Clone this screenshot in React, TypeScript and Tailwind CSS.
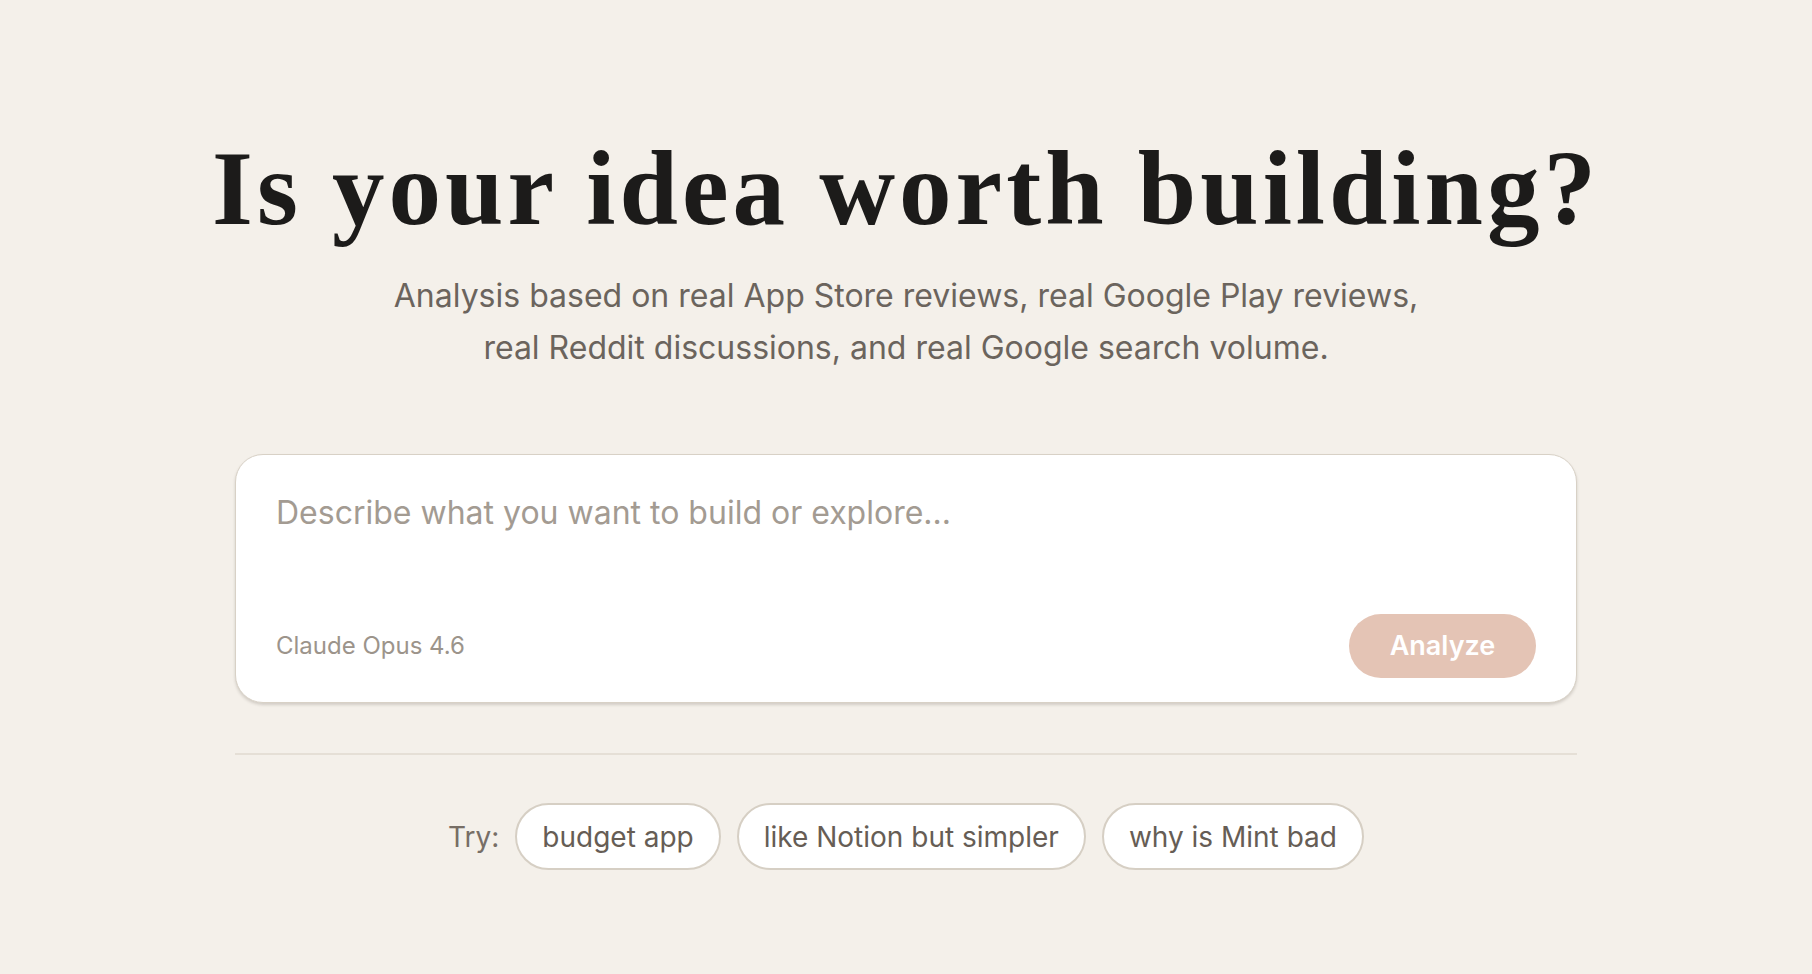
import React, { useState } from 'react';

const suggestions = ['budget app', 'like Notion but simpler', 'why is Mint bad'];

export default function App() {
  const [idea, setIdea] = useState('');

  return (
    <div className="min-h-screen bg-[#f4f0ea] font-['Inter','Noto_Sans',sans-serif] text-[#1c1c1c]">
      <main className="flex flex-col items-center pt-[136px] pb-24">
        {/* Hero */}
        <h1 className="font-['Liberation_Serif','Times_New_Roman',serif] text-[105px] font-bold leading-none tracking-[4px] text-[#1c1b1a]">
          Is your idea worth building?
        </h1>
        <p className="mt-[29px] text-center text-[32px] leading-[52px] text-[#6b645d]">
          Analysis based on real App Store reviews, real Google Play reviews,
          <br />
          real Reddit discussions, and real Google search volume.
        </p>

        {/* Prompt box */}
        <div className="mt-[80px] w-[1342px] rounded-[28px] border border-[#d8d1c6] bg-white shadow-[0_2px_3px_rgba(60,50,40,0.18)]">
          <div className="px-10 pt-[38px] pb-[24px]">
            <textarea
              value={idea}
              onChange={(e) => setIdea(e.target.value)}
              placeholder="Describe what you want to build or explore..."
              className="block h-[121px] w-full resize-none bg-transparent font-['Inter',sans-serif] text-[32px] leading-[40px] text-[#3a3632] outline-none placeholder:text-[#a39b92]"
            />
            <div className="flex items-center justify-between">
              <span className="text-[24px] text-[#9c948b]">Claude Opus 4.6</span>
              <button
                type="button"
                className="flex h-[64px] w-[187px] items-center justify-center rounded-full bg-[#e4c4b5] text-[27px] font-semibold text-white"
              >
                Analyze
              </button>
            </div>
          </div>
        </div>

        <div className="mt-[50px] h-[2px] w-[1342px] bg-[#e5dfd6]" />

        {/* Example prompts */}
        <div className="mt-[48px] flex items-center gap-[16px]">
          <span className="text-[28px] text-[#776e66]">Try:</span>
          {suggestions.map((s) => (
            <button
              key={s}
              type="button"
              onClick={() => setIdea(s)}
              className="flex h-[67px] items-center rounded-full border-2 border-[#d6cfc4] bg-white px-[25px] text-[28px] text-[#665d55]"
            >
              {s}
            </button>
          ))}
        </div>
      </main>
    </div>
  );
}
